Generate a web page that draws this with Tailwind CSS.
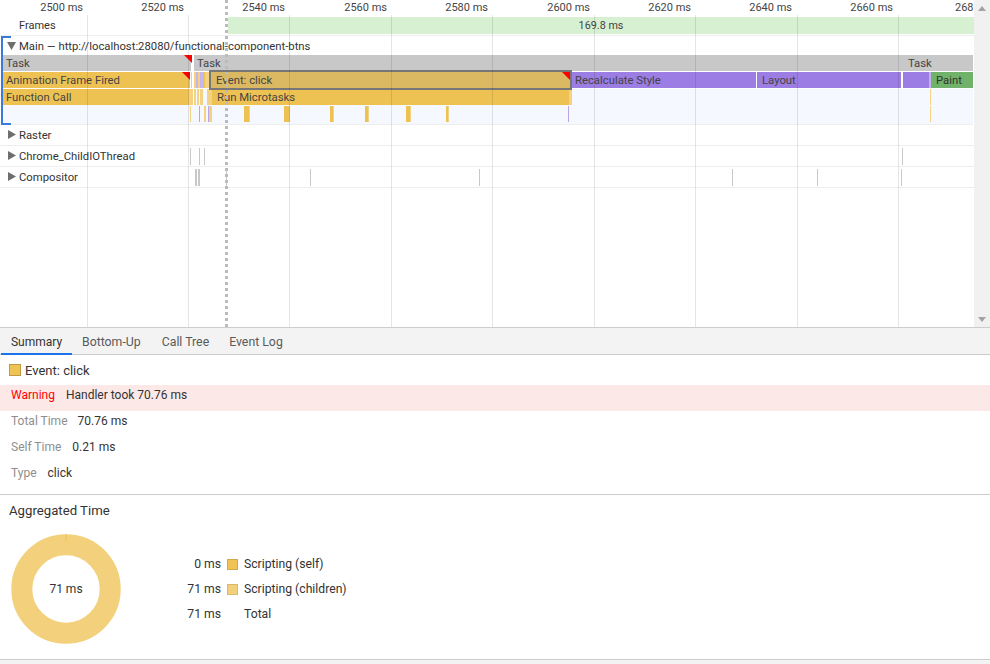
<!DOCTYPE html>
<html><head><meta charset="utf-8"><script src="https://cdn.jsdelivr.net/npm/@tailwindcss/browser@4"></script></head>
<body class="bg-white overflow-hidden">
<div class="w-[990px] h-[664px] flex flex-col font-['Roboto','Liberation_Sans',sans-serif] text-[12px] text-[#333] overflow-hidden">
  <!-- timeline -->
  <div class="h-[327px] flex shrink-0 relative">
    <div class="w-[974px] relative text-[11.3px]">
      <!-- ruler -->
      <div class="h-[17px] relative text-[#444] text-[11px] leading-[14px]">
        <span class="absolute right-[891px] top-[1px]">2500 ms</span>
        <span class="absolute right-[790px] top-[1px]">2520 ms</span>
        <span class="absolute right-[689px] top-[1px]">2540 ms</span>
        <span class="absolute right-[587px] top-[1px]">2560 ms</span>
        <span class="absolute right-[486px] top-[1px]">2580 ms</span>
        <span class="absolute right-[384px] top-[1px]">2600 ms</span>
        <span class="absolute right-[283px] top-[1px]">2620 ms</span>
        <span class="absolute right-[182px] top-[1px]">2640 ms</span>
        <span class="absolute right-[81px] top-[1px]">2660 ms</span>
        <span class="absolute left-[955px] top-[1px] whitespace-nowrap">268</span>
      </div>
      <!-- frames -->
      <div class="h-[19px] relative border-b border-[#eee]">
        <span class="absolute left-[19px] top-[2px] leading-[14px] text-[11px]">Frames</span>
        <div class="absolute left-[228px] right-0 top-0 h-[17px] bg-[#d7f0d1] flex items-center justify-center leading-none text-[#444] text-[10.8px]"><span class="pt-[1px]">169.8 ms</span></div>
      </div>
      <!-- main -->
      <div class="h-[19px] flex items-center relative">
        <svg class="absolute left-[7px] top-[6px]" width="9" height="8" viewBox="0 0 9 8"><path d="M0 0H9L4.500 8Z" fill="#6e6e6e"/></svg>
        <span class="absolute left-[19px] top-[4px] leading-[14px] whitespace-nowrap">Main — http://localhost:28080/functional-component-btns</span>
      </div>
      <div class="relative h-[70px] ml-[3px]">
        <!-- Task row -->
        <div class="h-[17px] relative">
          <div class="absolute left-0 w-[188px] h-[16px] bg-[#c8c8c8] pl-[3px] leading-[17px] text-[#444]">Task</div>
          <div class="absolute left-[191px] w-[709px] h-[16px] bg-[#c8c8c8] pl-[3px] leading-[17px] text-[#444]">Task</div>
          <div class="absolute left-[900px] w-[70px] h-[16px] bg-[#c8c8c8] pl-[5px] leading-[17px] text-[#444]">Task</div>
          <svg class="absolute left-[181px] top-0" width="8" height="8"><path d="M0 0H8V8Z" fill="#f00"/></svg>
        </div>
        <!-- Anim row -->
        <div class="h-[17px] relative">
          <div class="absolute left-0 w-[187px] h-[16px] bg-[#edc253] pl-[3px] leading-[18px] text-[#444]">Animation Frame Fired</div>
          <svg class="absolute left-[179px] top-0" width="8" height="8"><path d="M0 0H8V8Z" fill="#f00"/></svg>
          <div class="absolute left-[188px] w-[1px] h-[16px] bg-[#cfd8b8]"></div>
          <div class="absolute left-[191px] w-[2px] h-[16px] bg-[#f3d283]"></div>
          <div class="absolute left-[193px] w-[2px] h-[16px] bg-[#c4b5ea]"></div>
          <div class="absolute left-[195px] w-[2px] h-[16px] bg-[#f3d283]"></div>
          <div class="absolute left-[197px] w-[3px] h-[16px] bg-[#c4b5ea]"></div>
          <div class="absolute left-[200px] w-[2px] h-[16px] bg-[#edc253]"></div>
          <div class="absolute left-[202px] w-[4px] h-[16px] bg-[#f3d283]"></div>
          <div class="absolute left-[206px] w-[363px] h-[20px] top-[-2px] border-2 border-[#777] bg-[#dbb962] pl-[5px] leading-[18px] text-[#444] z-10">Event: click
            <svg class="absolute right-[0px] top-[0px]" width="8" height="8"><path d="M0 0H8V8Z" fill="#f00"/></svg>
          </div>
          <div class="absolute left-[569px] w-[184px] h-[16px] bg-[#9b7de3] pl-[3px] leading-[18px] text-[#444]">Recalculate Style</div>
          <div class="absolute left-[754px] w-[144px] h-[16px] bg-[#9b7de3] pl-[5px] leading-[18px] text-[#444]">Layout</div>
          <div class="absolute left-[900px] w-[26px] h-[16px] bg-[#9b7de3]"></div>
          <div class="absolute left-[926px] w-[2px] h-[16px] bg-[#c3b3ea]"></div>
          <div class="absolute left-[928px] w-[42px] h-[16px] bg-[#71b26a] pl-[5px] leading-[18px] text-[#333]">Paint</div>
        </div>
        <!-- Function row -->
        <div class="h-[17px] relative bg-[#f5f8fe] mr-[1px]">
          <div class="absolute left-0 w-[186px] h-[16px] bg-[#edc253] pl-[3px] leading-[18px] text-[#444]">Function Call</div>
          <div class="absolute left-[186px] w-[4px] h-[16px] bg-[#f3d283]"></div>
          <div class="absolute left-[190px] w-[1px] h-[16px] bg-white"></div>
          <div class="absolute left-[191px] w-[2px] h-[16px] bg-[#f3d283]"></div>
          <div class="absolute left-[194px] w-[2px] h-[16px] bg-[#f3d283]"></div>
          <div class="absolute left-[197px] w-[3px] h-[16px] bg-[#f3d283]"></div>
          <div class="absolute left-[204px] w-[5px] h-[16px] bg-[#f3d283]"></div>
          <div class="absolute left-[209px] w-[358px] h-[16px] bg-[#edc253] pl-[5px] leading-[18px] text-[#444]">Run Microtasks</div>
          <div class="absolute left-[566px] w-[3px] h-[16px] bg-[#f3d283]"></div>
          <div class="absolute left-[927px] w-[1px] h-[16px] bg-[#f3d283]"></div>
        </div>
        <!-- Micro row -->
        <div class="h-[19px] relative bg-[#f5f8fe] mr-[1px] border-b border-[#eee]">
          <div class="absolute left-[187px] w-[1px] h-[16px] bg-[#f3d283]"></div>
          <div class="absolute left-[196px] w-[1px] h-[16px] bg-[#b9a6e8]"></div>
          <div class="absolute left-[201px] w-[2px] h-[16px] bg-[#f3d283]"></div>
          <div class="absolute left-[205px] w-[1px] h-[16px] bg-[#b9a6e8]"></div>
          <div class="absolute left-[206px] w-[3px] h-[16px] bg-[#f3d283]"></div>
          <div class="absolute left-[241px] w-[5px] h-[16px] bg-[#edc253]"></div>
          <div class="absolute left-[246px] w-[1px] h-[16px] bg-[#f3d283]"></div>
          <div class="absolute left-[281px] w-[6px] h-[16px] bg-[#edc253]"></div>
          <div class="absolute left-[327px] w-[3px] h-[16px] bg-[#edc253]"></div>
          <div class="absolute left-[330px] w-[1px] h-[16px] bg-[#f3d283]"></div>
          <div class="absolute left-[362px] w-[3px] h-[16px] bg-[#edc253]"></div>
          <div class="absolute left-[365px] w-[1px] h-[16px] bg-[#f3d283]"></div>
          <div class="absolute left-[403px] w-[4px] h-[16px] bg-[#edc253]"></div>
          <div class="absolute left-[407px] w-[1px] h-[16px] bg-[#f3d283]"></div>
          <div class="absolute left-[443px] w-[2px] h-[16px] bg-[#edc253]"></div>
          <div class="absolute left-[445px] w-[1px] h-[16px] bg-[#f3d283]"></div>
          <div class="absolute left-[565px] w-[1px] h-[16px] bg-[#b9a6e8]"></div>
          <div class="absolute left-[927px] w-[1px] h-[16px] bg-[#f3d283]"></div>
        </div>
      </div>
      <!-- collapsed tracks -->
      <div class="h-[21px] relative border-b border-[#eee]">
        <svg class="absolute left-[8px] top-[5px]" width="8" height="9" viewBox="0 0 8 9"><path d="M0 0L8 4.500L0 9Z" fill="#6e6e6e"/></svg>
        <span class="absolute left-[19px] top-[4px] leading-[14px]">Raster</span>
      </div>
      <div class="h-[21px] relative border-b border-[#eee]">
        <svg class="absolute left-[8px] top-[5px]" width="8" height="9" viewBox="0 0 8 9"><path d="M0 0L8 4.500L0 9Z" fill="#6e6e6e"/></svg>
        <span class="absolute left-[19px] top-[4px] leading-[14px]">Chrome_ChildIOThread</span>
        <div class="absolute left-[190px] top-[2px] w-[1px] h-[17px] bg-[#c8c8c8]"></div>
        <div class="absolute left-[199px] top-[2px] w-[1px] h-[17px] bg-[#c8c8c8]"></div>
        <div class="absolute left-[204px] top-[2px] w-[1px] h-[17px] bg-[#c8c8c8]"></div>
        <div class="absolute left-[902px] top-[2px] w-[1px] h-[17px] bg-[#c8c8c8]"></div>
      </div>
      <div class="h-[21px] relative border-b border-[#eee]">
        <svg class="absolute left-[8px] top-[5px]" width="8" height="9" viewBox="0 0 8 9"><path d="M0 0L8 4.500L0 9Z" fill="#6e6e6e"/></svg>
        <span class="absolute left-[19px] top-[4px] leading-[14px]">Compositor</span>
        <div class="absolute left-[195px] top-[2px] w-[2px] h-[17px] bg-[#c8c8c8]"></div>
        <div class="absolute left-[198px] top-[2px] w-[2px] h-[17px] bg-[#c8c8c8]"></div>
        <div class="absolute left-[226px] top-[2px] w-[1px] h-[17px] bg-[#c8c8c8]"></div>
        <div class="absolute left-[310px] top-[2px] w-[1px] h-[17px] bg-[#c8c8c8]"></div>
        <div class="absolute left-[479px] top-[2px] w-[1px] h-[17px] bg-[#c8c8c8]"></div>
        <div class="absolute left-[732px] top-[2px] w-[1px] h-[17px] bg-[#c8c8c8]"></div>
        <div class="absolute left-[817px] top-[2px] w-[1px] h-[17px] bg-[#c8c8c8]"></div>
        <div class="absolute left-[901px] top-[2px] w-[1px] h-[17px] bg-[#c8c8c8]"></div>
      </div>
      <!-- grid lines overlay -->
      <div class="absolute inset-0 pointer-events-none z-20">
        <div class="absolute left-[87px] top-[15px] bottom-0 w-[1px] bg-black/10"></div>
        <div class="absolute left-[188px] top-[15px] bottom-0 w-[1px] bg-black/10"></div>
        <div class="absolute left-[289px] top-[15px] bottom-0 w-[1px] bg-black/10"></div>
        <div class="absolute left-[391px] top-[15px] bottom-0 w-[1px] bg-black/10"></div>
        <div class="absolute left-[492px] top-[15px] bottom-0 w-[1px] bg-black/10"></div>
        <div class="absolute left-[594px] top-[15px] bottom-0 w-[1px] bg-black/10"></div>
        <div class="absolute left-[695px] top-[15px] bottom-0 w-[1px] bg-black/10"></div>
        <div class="absolute left-[797px] top-[15px] bottom-0 w-[1px] bg-black/10"></div>
        <div class="absolute left-[898px] top-[15px] bottom-0 w-[1px] bg-black/10"></div>
        <div class="absolute left-[225px] top-0 bottom-0 w-[3px] border-l-[3px] border-dotted border-[#bbb]"></div>
      </div>
      <!-- bracket -->
      <div class="absolute left-[1px] top-[36px] w-[10px] h-[89px] border-l-2 border-y-2 border-[#3a7bd9] z-30"></div>
    </div>
    <!-- scrollbar -->
    <div class="w-[16px] bg-[#f1f1f1] relative">
      <svg class="absolute left-[4px] top-[6px]" width="8" height="5"><path d="M4 0L8 5H0Z" fill="#a3a3a3"/></svg>
      <svg class="absolute left-[4px] bottom-[5px]" width="8" height="5"><path d="M0 0H8L4 5Z" fill="#a3a3a3"/></svg>
    </div>
  </div>
  <!-- tabs -->
  <div class="h-[28px] shrink-0 bg-[#f3f3f3] border-y border-[#ccc] flex pl-[1px] text-[#5a5a5a] leading-[28px] text-[12.3px]">
    <div class="w-[71px] text-center border-b-2 border-[#1a73e8] h-[27px] text-[#333] text-[12px]">Summary</div>
    <div class="ml-[10px]">Bottom-Up</div>
    <div class="ml-[21px]">Call Tree</div>
    <div class="ml-[20px]">Event Log</div>
  </div>
  <!-- summary -->
  <div class="h-[140px] shrink-0 border-b border-[#ccc] flex flex-col">
    <div class="h-[30px] flex items-center pl-[9px] gap-[4px] shrink-0 text-[13px]">
      <span class="w-[12px] h-[12px] bg-[#f0c354] border border-[#bf9b43]"></span><span class="leading-[18px] pt-[1px]">Event: click</span>
    </div>
    <div class="h-[26px] bg-[#fde8e8] pl-[11px] flex shrink-0 leading-[20px]"><span class="text-[#f00]">Warning</span><span class="ml-[11px]">Handler took 70.76 ms</span></div>
    <div class="h-[20px] pl-[11px] flex items-center shrink-0"><span class="text-[#8e8e8e]">Total Time</span><span class="ml-[10px]">70.76 ms</span></div>
    <div class="h-[20px] mt-[5.5px] pl-[11px] flex items-center shrink-0"><span class="text-[#8e8e8e]">Self Time</span><span class="ml-[11px]">0.21 ms</span></div>
    <div class="h-[20px] mt-[6px] pl-[11px] flex items-center shrink-0"><span class="text-[#8e8e8e]">Type</span><span class="ml-[11px]">click</span></div>
  </div>
  <!-- aggregated -->
  <div class="h-[165px] shrink-0 border-b border-[#ccc] relative">
    <div class="absolute left-[9px] top-[8px] leading-[16px] text-[13.2px]">Aggregated Time</div>
    <svg class="absolute left-[11px] top-[39px]" width="110" height="110" viewBox="0 0 110 110">
      <circle cx="55" cy="55" r="44.200" fill="none" stroke="#f3d17c" stroke-width="21"/>
      <rect x="54.500" y="0" width="1" height="7" fill="#edc253"/>
    </svg>
    <div class="absolute left-[11px] top-[87px] w-[110px] text-center leading-[14px]">71 ms</div>
    <div class="absolute left-[170px] top-[57px] flex flex-col text-[12.2px]">
      <div class="h-[25px] flex items-center"><span class="w-[51px] text-right">0 ms</span><span class="ml-[6px] w-[11px] h-[11px] bg-[#f0c354] border border-[#d2aa4a]"></span><span class="ml-[6px]">Scripting (self)</span></div>
      <div class="h-[25px] flex items-center"><span class="w-[51px] text-right">71 ms</span><span class="ml-[6px] w-[11px] h-[11px] bg-[#f3d17c] border border-[#d9b96e]"></span><span class="ml-[6px]">Scripting (children)</span></div>
      <div class="h-[25px] flex items-center"><span class="w-[51px] text-right">71 ms</span><span class="ml-[23px]">Total</span></div>
    </div>
  </div>
  <div class="flex-1 bg-[#f3f3f3]"></div>
</div>
</body></html>
